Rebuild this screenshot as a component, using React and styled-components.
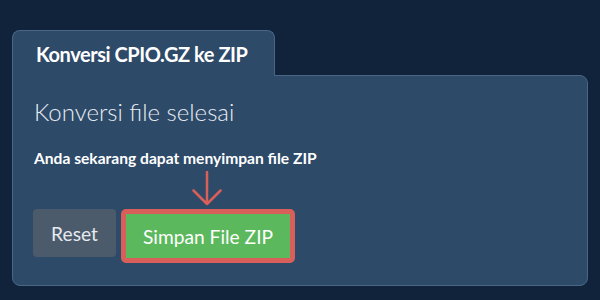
import styled, { createGlobalStyle } from 'styled-components';

const GlobalStyle = createGlobalStyle`
  html, body {
    margin: 0;
    padding: 0;
    background: #10233a;
  }
  body {
    font-family: Lato, "Open Sans", sans-serif;
    color: #f2f4f7;
  }
`;

const Page = styled.div`
  width: 600px;
  height: 300px;
  padding: 30px 0 0 12px;
  box-sizing: border-box;
`;

const Card = styled.div`
  width: 576px;
  display: flex;
  flex-direction: column;
`;

const Tab = styled.div`
  position: relative;
  z-index: 1;
  width: 263px;
  height: 46px;
  box-sizing: border-box;
  margin-bottom: -1px;
  padding: 11px 0 0 23px;
  background: #2d4a69;
  border: 1px solid #4a6585;
  border-bottom: none;
  border-radius: 8px 8px 0 0;
  font-size: 20px;
  font-weight: 700;
  color: #ffffff;
  letter-spacing: -0.45px;
  line-height: 24px;
`;

const Body = styled.div`
  height: 211px;
  box-sizing: border-box;
  padding: 22px 0 0 20px;
  background: #2d4a69;
  border: 1px solid #4a6585;
  border-radius: 0 8px 8px 8px;
`;

const Heading = styled.h2`
  margin: 0 0 0 1px;
  font-size: 24px;
  font-weight: 300;
  color: #e8ecf1;
  line-height: 28px;
`;

const Note = styled.p`
  margin: 23px 0 0 1px;
  font-size: 15.6px;
  font-weight: 700;
  color: #ffffff;
  line-height: 18px;
`;

const ArrowRow = styled.div`
  height: 42px;
  box-sizing: border-box;
  padding: 4px 0 0 159px;
  display: flex;
  align-items: flex-start;
`;

const Actions = styled.div`
  display: flex;
  align-items: flex-start;
  gap: 5px;
`;

const Button = styled.button`
  font-family: Lato, "Open Sans", sans-serif;
  font-size: 19.2px;
  font-weight: 400;
  color: ${(p) => (p.$primary ? '#ffffff' : '#e6e9ee')};
  background: ${(p) => (p.$primary ? '#5cb85c' : '#4b5b6c')};
  border: ${(p) => (p.$primary ? '5px solid #d9605a' : 'none')};
  border-radius: ${(p) => (p.$primary ? '5px' : '4px')};
  height: ${(p) => (p.$primary ? '54px' : '48px')};
  width: ${(p) => (p.$primary ? '174px' : '83px')};
  padding: 0;
  cursor: pointer;
`;

const Arrow = () => (
  <svg width="30" height="35" viewBox="0 0 30 35" fill="none">
    <path
      d="M15 1 V33 M1.5 19.5 L15 33 L28.5 19.5"
      stroke="#d9605a"
      strokeWidth="2.5"
      strokeLinecap="round"
      strokeLinejoin="round"
    />
  </svg>
);

export default function App() {
  return (
    <Page>
      <GlobalStyle />
      <Card>
        <Tab>Konversi CPIO.GZ ke ZIP</Tab>
        <Body>
          <Heading>Konversi file selesai</Heading>
          <Note>Anda sekarang dapat menyimpan file ZIP</Note>
          <ArrowRow>
            <Arrow />
          </ArrowRow>
          <Actions>
            <Button>Reset</Button>
            <Button $primary>Simpan File ZIP</Button>
          </Actions>
        </Body>
      </Card>
    </Page>
  );
}
